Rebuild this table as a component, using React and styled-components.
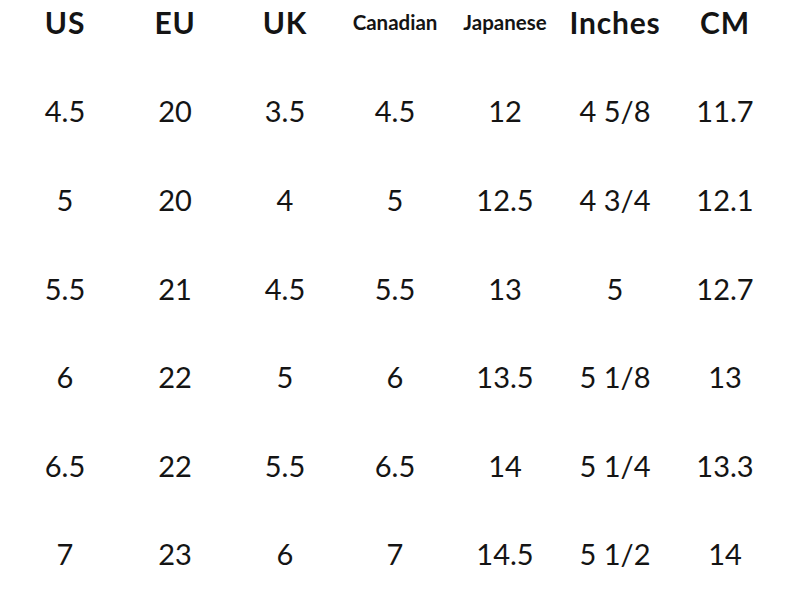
import React from "react";
import styled, { createGlobalStyle } from "styled-components";

const Global = createGlobalStyle`
  html, body { margin: 0; padding: 0; background: #fff; }
  body { font-family: Lato, "Noto Sans", sans-serif; color: #141414; }
`;

const Chart = styled.div`
  width: 794px;
  height: 597px;
  padding-left: 10px;
  box-sizing: border-box;
  background: #fff;
  overflow: hidden;
`;

const Row = styled.div`
  display: grid;
  grid-template-columns: repeat(7, 110px);
  align-items: center;
  height: ${(p) => (p.$head ? "44px" : "88.6px")};
  margin-top: ${(p) => (p.$first ? "22.7px" : "0")};
`;

const Head = styled.div`
  text-align: center;
  font-weight: 700;
  font-size: ${(p) => (p.$small ? "20.5px" : "30px")};
  letter-spacing: ${(p) => (p.$small ? "0" : "0.8px")};
  line-height: 1;
`;

const Cell = styled.div`
  text-align: center;
  font-size: 29px;
  font-weight: 400;
  line-height: 1;
`;

const headers = [
  ["US"],
  ["EU"],
  ["UK"],
  ["Canadian", true],
  ["Japanese", true],
  ["Inches"],
  ["CM"],
];

const rows = [
  ["4.5", "20", "3.5", "4.5", "12", "4 5/8", "11.7"],
  ["5", "20", "4", "5", "12.5", "4 3/4", "12.1"],
  ["5.5", "21", "4.5", "5.5", "13", "5", "12.7"],
  ["6", "22", "5", "6", "13.5", "5 1/8", "13"],
  ["6.5", "22", "5.5", "6.5", "14", "5 1/4", "13.3"],
  ["7", "23", "6", "7", "14.5", "5 1/2", "14"],
];

export default function App() {
  return (
    <>
      <Global />
      <Chart>
        <Row $head>
          {headers.map(([t, s]) => (
            <Head key={t} $small={s}>
              {t}
            </Head>
          ))}
        </Row>
        {rows.map((r, i) => (
          <Row key={i} $first={i === 0}>
            {r.map((v, j) => (
              <Cell key={j}>{v}</Cell>
            ))}
          </Row>
        ))}
      </Chart>
    </>
  );
}
